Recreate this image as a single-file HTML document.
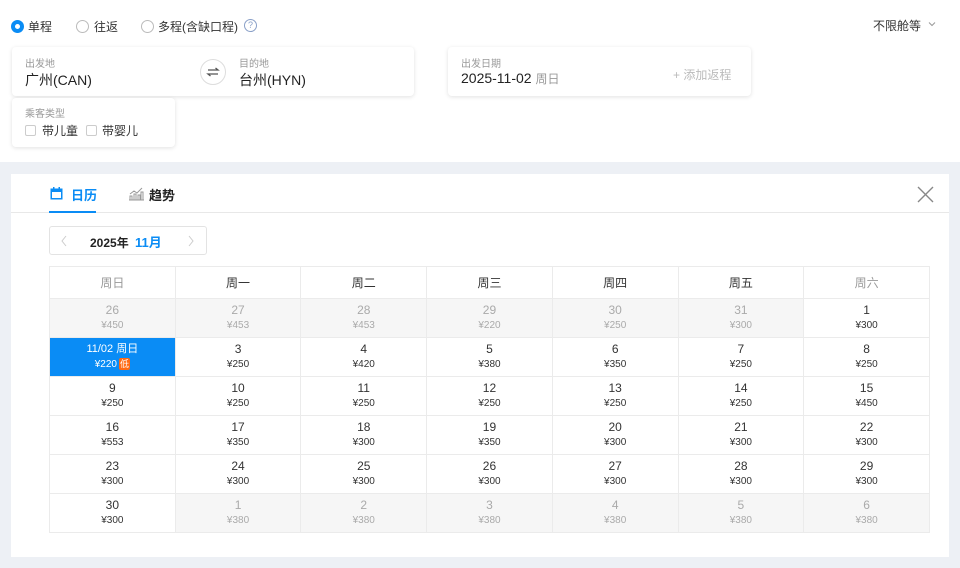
<!DOCTYPE html>
<html><head><meta charset="utf-8"><style>
*{margin:0;padding:0;box-sizing:border-box}
body{width:960px;height:568px;overflow:hidden;background:#fff;font-family:"Liberation Sans","Noto Sans CJK SC",sans-serif;color:#333;position:relative}
.abs{position:absolute}
.radio{position:absolute;top:20px;width:13px;height:13px;border-radius:50%;border:1px solid #bbb;background:#fff}
.lbl{position:absolute;top:18px;font-size:12px;color:#333}
.box{position:absolute;background:#fff;border-radius:4px;box-shadow:0 1px 4px rgba(0,0,0,.12)}
.sm{font-size:10px;color:#999;position:absolute}
.big{font-size:14px;color:#222;position:absolute}
.cb{position:absolute;width:11px;height:11px;border:1px solid #ccc;border-radius:2px;top:125px}
table{position:absolute;left:49px;top:266px;border-collapse:collapse;table-layout:fixed;width:881px}
td,th{border:1px solid #ebebeb;text-align:center;font-weight:normal}
th{height:32px;font-size:12px;color:#333}
td{height:39px;font-size:12px;color:#333;line-height:15px;vertical-align:middle}
td span{display:block;font-size:10px;color:#333}
td.g{background:#f6f6f6;color:#aaa}td.g span{color:#aaa}
td.sel{background:#0a8cf5;color:#fff;font-size:11px}td.sel span{color:#fff}
.low{display:inline-block;background:#ff6a14;color:#fff;font-size:9px;line-height:12px;padding:0 1px;border-radius:2px;margin-left:2px}
</style></head><body>
<div class="radio" style="left:11px;border:4px solid #0a8cf5"></div><div class="lbl" style="left:28px">单程</div>
<div class="radio" style="left:76px"></div><div class="lbl" style="left:94px">往返</div>
<div class="radio" style="left:141px"></div><div class="lbl" style="left:158px">多程(含缺口程)</div>
<div class="abs" style="left:244px;top:19px;width:13px;height:13px;border:1px solid #8aa0c8;border-radius:50%;font-size:9px;color:#8aa0c8;text-align:center;line-height:11px">?</div>
<div class="lbl" style="left:873px;top:17px">不限舱等</div>
<svg class="abs" style="left:928px;top:21px" width="8" height="6"><path d="M1 1.5L4 4.5L7 1.5" stroke="#999" fill="none"/></svg>

<div class="box" style="left:12px;top:47px;width:402px;height:49px">
<div class="sm" style="left:13px;top:8px">出发地</div><div class="big" style="left:13px;top:23px">广州(CAN)</div>
<div class="abs" style="left:188px;top:12px;width:26px;height:26px;border:1px solid #ddd;border-radius:50%">
<svg width="24" height="24"><path d="M7 10h10l-2.5-2M17 14H7l2.5 2" stroke="#555" stroke-width="1.3" fill="none"/></svg></div>
<div class="sm" style="left:227px;top:8px">目的地</div><div class="big" style="left:227px;top:23px">台州(HYN)</div>
</div>
<div class="box" style="left:448px;top:47px;width:303px;height:49px">
<div class="sm" style="left:13px;top:8px">出发日期</div><div class="big" style="left:13px;top:23px">2025-11-02 <span style="font-size:12px;color:#999">周日</span></div>
<div class="abs" style="left:225px;top:19px;font-size:12px;color:#bbb">+ 添加返程</div>
</div>
<div class="box" style="left:12px;top:98px;width:163px;height:49px">
<div class="sm" style="left:13px;top:7px">乘客类型</div>
</div>
<div class="cb" style="left:25px"></div><div class="abs" style="left:42px;top:122px;font-size:12px">带儿童</div>
<div class="cb" style="left:86px"></div><div class="abs" style="left:102px;top:122px;font-size:12px">带婴儿</div>

<div class="abs" style="left:0;top:162px;width:960px;height:406px;background:#edf0f5"></div>
<div class="abs" style="left:11px;top:174px;width:938px;height:383px;background:#fff"></div>
<div class="abs" style="left:11px;top:212px;width:938px;height:1px;background:#e8e8e8"></div>
<div class="abs" style="left:49px;top:211px;width:47px;height:2px;background:#0a8cf5"></div>
<svg class="abs" style="left:50px;top:187px" width="13" height="13"><rect x="0.5" y="1.5" width="12" height="11" fill="#0a8cf5"/><rect x="2" y="5" width="9" height="6" fill="#fff"/><rect x="3" y="0" width="1.5" height="3" fill="#0a8cf5"/><rect x="8.5" y="0" width="1.5" height="3" fill="#0a8cf5"/></svg>
<div class="abs" style="left:71px;top:185px;font-size:13px;font-weight:bold;color:#0a8cf5">日历</div>
<svg class="abs" style="left:129px;top:187px" width="15" height="14"><path d="M0 13h15M1 13V9h2v4M5 13V7h2v6M9 13V8h2v5M12 13V5h2v8M1 7l4-3 3 2 5-5" stroke="#999" fill="none"/></svg>
<div class="abs" style="left:149px;top:185px;font-size:13px;font-weight:bold;color:#222">趋势</div>
<svg class="abs" style="left:917px;top:186px" width="17" height="17"><path d="M1 1L16 16M16 1L1 16" stroke="#888" stroke-width="1.4"/></svg>

<div class="abs" style="left:49px;top:226px;width:158px;height:29px;border:1px solid #e3e3e3;border-radius:3px"></div>
<svg class="abs" style="left:60px;top:235px" width="8" height="12"><path d="M6 1L2 6l4 5" stroke="#ccc" fill="none"/></svg>
<svg class="abs" style="left:187px;top:235px" width="8" height="12"><path d="M2 1l4 5-4 5" stroke="#ccc" fill="none"/></svg>
<div class="abs" style="left:90px;top:232px;font-size:12px;font-weight:bold;color:#222">2025年 <span style="color:#0a8cf5;font-size:13px;margin-left:3px">11月</span></div>

<table>
<tr><th style="color:#999">周日</th><th>周一</th><th>周二</th><th>周三</th><th>周四</th><th>周五</th><th style="color:#999">周六</th></tr>
<tr><td class="g">26<span>¥450</span></td><td class="g">27<span>¥453</span></td><td class="g">28<span>¥453</span></td><td class="g">29<span>¥220</span></td><td class="g">30<span>¥250</span></td><td class="g">31<span>¥300</span></td><td>1<span>¥300</span></td></tr>
<tr><td class="sel">11/02 周日<span>¥220<i class="low" style="font-style:normal">低</i></span></td><td>3<span>¥250</span></td><td>4<span>¥420</span></td><td>5<span>¥380</span></td><td>6<span>¥350</span></td><td>7<span>¥250</span></td><td>8<span>¥250</span></td></tr>
<tr><td>9<span>¥250</span></td><td>10<span>¥250</span></td><td>11<span>¥250</span></td><td>12<span>¥250</span></td><td>13<span>¥250</span></td><td>14<span>¥250</span></td><td>15<span>¥450</span></td></tr>
<tr><td>16<span>¥553</span></td><td>17<span>¥350</span></td><td>18<span>¥300</span></td><td>19<span>¥350</span></td><td>20<span>¥300</span></td><td>21<span>¥300</span></td><td>22<span>¥300</span></td></tr>
<tr><td>23<span>¥300</span></td><td>24<span>¥300</span></td><td>25<span>¥300</span></td><td>26<span>¥300</span></td><td>27<span>¥300</span></td><td>28<span>¥300</span></td><td>29<span>¥300</span></td></tr>
<tr><td>30<span>¥300</span></td><td class="g">1<span>¥380</span></td><td class="g">2<span>¥380</span></td><td class="g">3<span>¥380</span></td><td class="g">4<span>¥380</span></td><td class="g">5<span>¥380</span></td><td class="g">6<span>¥380</span></td></tr>
</table>
</body></html>
